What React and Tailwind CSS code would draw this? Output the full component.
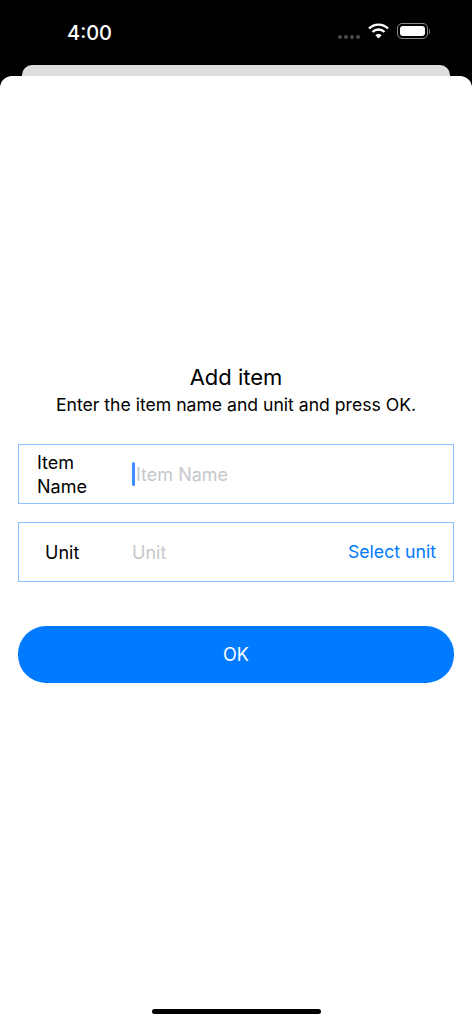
export default function App() {
  return (
    <div className="w-[472px] h-[1024px] bg-black flex flex-col overflow-hidden font-['Inter',sans-serif]">
      <div className="h-[65px] shrink-0 flex items-start justify-between pl-[67px] pr-[42px] pt-[21px]">
        <span className="text-white text-[20px] leading-[24px] font-medium">4:00</span>
        <div className="flex items-center mt-[2px]">
          <div className="flex gap-[2px] mt-[11px] mr-[8px]">
            <span className="w-[4px] h-[4px] rounded-full bg-[#4a4a4a]"></span>
            <span className="w-[4px] h-[4px] rounded-full bg-[#4a4a4a]"></span>
            <span className="w-[4px] h-[4px] rounded-full bg-[#4a4a4a]"></span>
            <span className="w-[4px] h-[4px] rounded-full bg-[#4a4a4a]"></span>
          </div>
          <svg width="21" height="16" viewBox="0 0 21 16" className="mr-[8px]">
            <path d="M1 5.5 A13.5 13.5 0 0 1 20 5.5" fill="none" stroke="#fff" strokeWidth="2.4" />
            <path d="M4.5 9 A8.5 8.5 0 0 1 16.5 9" fill="none" stroke="#fff" strokeWidth="2.4" />
            <path d="M10.5 15.5 L7.4 12.2 A4.4 4.4 0 0 1 13.6 12.2 Z" fill="#fff" />
          </svg>
          <div className="w-[31px] h-[16px] rounded-[5px] border border-[#8a8a8a] p-[2px]">
            <div className="w-full h-full rounded-[3px] bg-white"></div>
          </div>
          <div className="w-[1.5px] h-[5px] ml-[1px] rounded-r-full bg-[#777]"></div>
        </div>
      </div>
      <div className="h-[11px] shrink-0 mx-[22px] rounded-t-[10px] bg-[#dedede]"></div>
      <div className="flex-1 bg-white rounded-t-[12px] flex flex-col items-center pt-[286px] relative">
        <h1 className="text-[22px] leading-[30px] font-normal text-black">Add item</h1>
        <p className="text-[17.6px] leading-[26px] text-black">Enter the item name and unit and press OK.</p>
        <div className="w-[436px] h-[60px] mt-[26px] border border-[#8cc0ff] flex items-center">
          <div className="w-[113px] pl-[18px] pt-[2px] text-[18px] leading-[24px] text-black shrink-0">Item<br />Name</div>
          <div className="w-[3px] h-[24px] bg-[#3f8fff] rounded-full"></div>
          <span className="text-[18px] text-[#c7c7cc] ml-[1px]">Item Name</span>
        </div>
        <div className="w-[436px] h-[60px] mt-[18px] border border-[#8cc0ff] flex items-center">
          <div className="w-[113px] pl-[26px] text-[18px] text-black shrink-0">Unit</div>
          <span className="text-[18px] text-[#c7c7cc] flex-1">Unit</span>
          <span className="text-[17.7px] text-[#007aff] pr-[17px]">Select unit</span>
        </div>
        <button className="w-[436px] h-[57px] mt-[44px] rounded-[28px] bg-[#007aff] text-white text-[18px] flex items-center justify-center">OK</button>
        <div className="absolute left-[152px] top-[933px] w-[169px] h-[5px] rounded-full bg-black"></div>
      </div>
    </div>
  );
}
